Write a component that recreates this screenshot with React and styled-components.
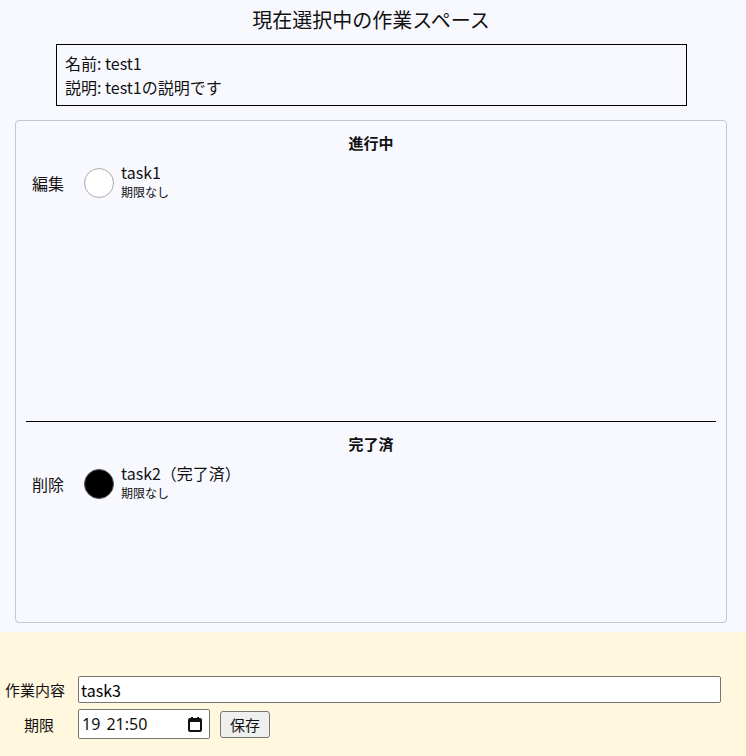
import styled, { createGlobalStyle } from "styled-components";

const GlobalStyle = createGlobalStyle`
  body {
    margin: 0;
    background: #f8f9ff;
    font-family: "Noto Sans CJK JP", "Noto Sans", sans-serif;
    color: #111;
  }
`;

const tasks = [
  { id: 1, title: "task1", due: "期限なし", done: false },
  { id: 2, title: "task2（完了済）", due: "期限なし", done: true },
];

const TaskRow = ({ task }) => (
  <Row>
    <Action>{task.done ? "削除" : "編集"}</Action>
    <Check $done={task.done} />
    <TaskText>
      <TaskTitle>{task.title}</TaskTitle>
      <TaskDue>{task.due}</TaskDue>
    </TaskText>
  </Row>
);

const CalendarIcon = () => (
  <svg width="14" height="16" viewBox="0 0 14 16">
    <rect x="1" y="3" width="12" height="12" rx="1" fill="none" stroke="#111" strokeWidth="2" />
    <rect x="1" y="3" width="12" height="3" fill="#111" />
    <rect x="3" y="1" width="2" height="3" fill="#111" />
    <rect x="9" y="1" width="2" height="3" fill="#111" />
  </svg>
);

export default function App() {
  return (
    <>
      <GlobalStyle />
      <Main>
        <Heading>現在選択中の作業スペース</Heading>
        <InfoBox>
          <div>名前: test1</div>
          <div>説明: test1の説明です</div>
        </InfoBox>
        <Board>
          <Section $height="300px">
            <SectionTitle>進行中</SectionTitle>
            {tasks.filter((t) => !t.done).map((t) => (
              <TaskRow key={t.id} task={t} />
            ))}
          </Section>
          <Divider />
          <Section $height="200px">
            <SectionTitle>完了済</SectionTitle>
            {tasks.filter((t) => t.done).map((t) => (
              <TaskRow key={t.id} task={t} />
            ))}
          </Section>
        </Board>
      </Main>
      <Footer>
        <FormRow>
          <Label>作業内容</Label>
          <TextInput defaultValue="task3" />
        </FormRow>
        <FormRow>
          <Label $center>期限</Label>
          <DateBox>
            <DateText>19 21:50</DateText>
            <CalendarIcon />
          </DateBox>
          <SaveButton>保存</SaveButton>
        </FormRow>
      </Footer>
    </>
  );
}

const Main = styled.div`
  display: flex;
  flex-direction: column;
  align-items: center;
  padding: 6px 19px 9px 15px;
`;

const Heading = styled.h1`
  margin: 0;
  font-size: 20px;
  font-weight: 400;
  line-height: 28px;
`;

const InfoBox = styled.div`
  margin-top: 10px;
  box-sizing: border-box;
  width: 631px;
  padding: 6px 8px;
  border: 1px solid #000;
  font-size: 16px;
  line-height: 24px;
  align-self: flex-start;
  margin-left: 41px;
`;

const Board = styled.div`
  margin-top: 14px;
  box-sizing: border-box;
  width: 100%;
  border: 1px solid #c3c7cd;
  border-radius: 4px;
  padding: 0 10px;
`;

const Section = styled.div`
  height: ${(p) => p.$height};
`;

const SectionTitle = styled.h2`
  margin: 0;
  padding-top: 12px;
  font-size: 15px;
  font-weight: 700;
  text-align: center;
  line-height: 20px;
`;

const Divider = styled.hr`
  margin: 0;
  border: none;
  border-top: 1px solid #000;
`;

const Row = styled.div`
  display: flex;
  align-items: center;
  margin-top: 13px;
  padding-left: 6px;
`;

const Action = styled.span`
  font-size: 16px;
  width: 52px;
`;

const Check = styled.span`
  width: 28px;
  height: 28px;
  border-radius: 50%;
  border: 1px solid #aaa;
  background: ${(p) => (p.$done ? "#000" : "#fff")};
  ${(p) => p.$done && "border-color: #555;"}
`;

const TaskText = styled.div`
  display: flex;
  flex-direction: column;
  margin-left: 7px;
  margin-top: -4px;
`;

const TaskTitle = styled.span`
  font-size: 16px;
  line-height: 21px;
`;

const TaskDue = styled.span`
  font-size: 12px;
  line-height: 17px;
`;

const Footer = styled.div`
  background: #fff8df;
  padding: 44px 0 17px 0;
  display: flex;
  flex-direction: column;
  gap: 6px;
`;

const FormRow = styled.div`
  display: flex;
  align-items: center;
`;

const Label = styled.label`
  width: 78px;
  box-sizing: border-box;
  padding-left: 5px;
  font-size: 15px;
  ${(p) => p.$center && "text-align: center; padding-left: 0;"}
`;

const TextInput = styled.input`
  box-sizing: border-box;
  width: 643px;
  height: 27px;
  border: 1px solid #767676;
  border-radius: 2px;
  padding: 0 2px;
  font-size: 16px;
  font-family: "Noto Sans CJK JP", sans-serif;
  background: #fff;
`;

const DateBox = styled.div`
  box-sizing: border-box;
  width: 132px;
  height: 30px;
  border: 1px solid #767676;
  border-radius: 2px;
  background: #fff;
  display: flex;
  align-items: center;
  justify-content: space-between;
  padding: 0 7px 0 3px;
`;

const DateText = styled.span`
  font-family: "Noto Sans", sans-serif;
  font-size: 16px;
  word-spacing: 2px;
`;

const SaveButton = styled.button`
  margin-left: 10px;
  height: 27px;
  width: 50px;
  padding: 0;
  border: 1px solid #767676;
  border-radius: 3px;
  background: #efefef;
  font-size: 15px;
  font-family: "Noto Sans CJK JP", sans-serif;
  color: #111;
`;
